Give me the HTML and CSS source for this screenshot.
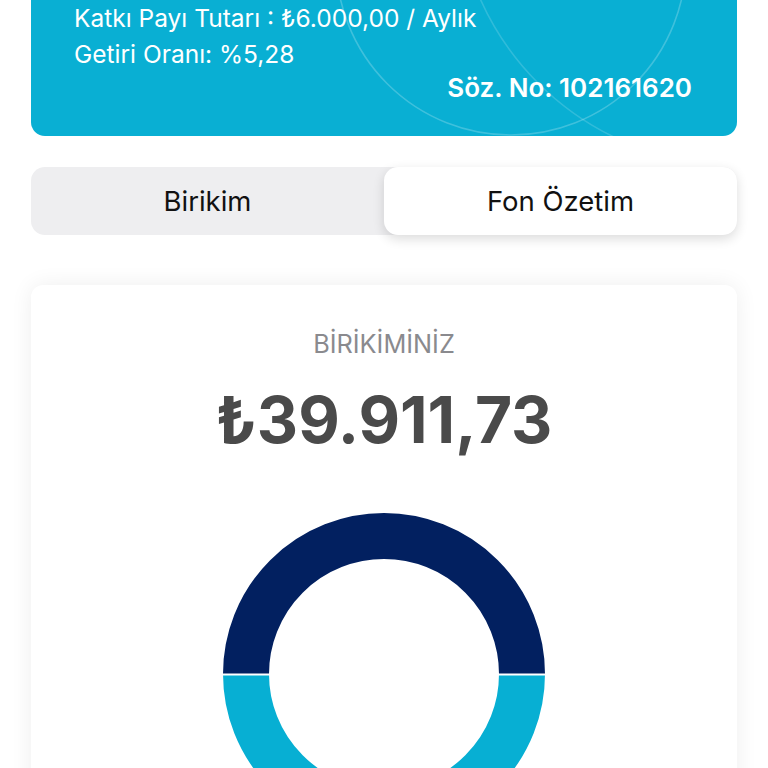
FILE: index.html
```html
<!DOCTYPE html>
<html lang="tr">
<head>
<meta charset="utf-8">
<link rel="stylesheet" href="styles.css">
</head>
<body>
<div class="page">
  <section class="banner">
    <svg class="banner-deco" width="706" height="136" viewBox="0 0 706 136" aria-hidden="true">
      <circle cx="480" cy="-40" r="175" fill="none" stroke="rgba(255,255,255,0.22)" stroke-width="1.6"/>
      <circle cx="705" cy="-115" r="280" fill="none" stroke="rgba(255,255,255,0.16)" stroke-width="1.6"/>
      <circle cx="880" cy="210" r="185" fill="none" stroke="rgba(255,255,255,0.3)" stroke-width="1.6"/>
    </svg>
    <p class="banner-line">Katkı Payı Tutarı : ₺6.000,00 / Aylık</p>
    <p class="banner-line">Getiri Oranı: %5,28</p>
    <p class="banner-no">Söz. No: 102161620</p>
  </section>

  <nav class="segmented">
    <div class="seg-item">Birikim</div>
    <div class="seg-item seg-active">Fon Özetim</div>
  </nav>

  <section class="card">
    <p class="card-label">BİRİKİMİNİZ</p>
    <p class="card-amount">₺39.911,73</p>
    <div class="donut">
      <svg width="322" height="322" viewBox="0 0 322 322">
        <path d="M 23 161 A 138 138 0 0 1 299 161" fill="none" stroke="#022060" stroke-width="46"/>
        <path d="M 23 161 A 138 138 0 0 0 299 161" fill="none" stroke="#07AFD3" stroke-width="46"/>
        <line x1="0" y1="161.5" x2="322" y2="161.5" stroke="#ffffff" stroke-width="2"/>
      </svg>
    </div>
  </section>
</div>
</body>
</html>
```

FILE: styles.css
```css
* { box-sizing: border-box; }
html, body {
  margin: 0;
  padding: 0;
  background: #ffffff;
  font-family: Inter, "Noto Sans", "DejaVu Sans", sans-serif;
  overflow: hidden;
}
p { margin: 0; }

.page {
  padding: 0 31px;
}

.banner {
  position: relative;
  overflow: hidden;
  background: #09AFD3;
  border-radius: 0 0 14px 14px;
  padding: 0 45px 32px 43px;
  color: #ffffff;
}
.banner-deco {
  position: absolute;
  left: 0;
  top: 0;
}
.banner-line {
  position: relative;
  font-size: 24.5px;
  line-height: 36px;
}
.banner-no {
  position: relative;
  text-align: right;
  font-size: 26px;
  font-weight: 600;
  line-height: 32px;
}

.segmented {
  margin-top: 31px;
  display: grid;
  grid-template-columns: 1fr 1fr;
  height: 68px;
  background: #EEEEF0;
  border-radius: 14px;
}
.seg-item {
  display: flex;
  align-items: center;
  justify-content: center;
  font-size: 27.5px;
  color: #111111;
  border-radius: 14px;
}
.seg-active {
  background: #ffffff;
  box-shadow: 0 4px 12px rgba(0, 0, 0, 0.14);
}

.card {
  margin-top: 50px;
  background: #ffffff;
  border-radius: 12px;
  box-shadow: 0 0 22px rgba(0, 0, 0, 0.07);
  padding-top: 44px;
  display: flex;
  flex-direction: column;
  align-items: center;
  height: 600px;
}
.card-label {
  font-size: 25.3px;
  line-height: 30px;
  color: #8A8A8E;
}
.card-amount {
  margin-top: 25px;
  font-size: 64px;
  line-height: 72px;
  font-weight: 700;
  color: #4A4A4A;
}
.donut {
  margin-top: 57px;
  width: 322px;
  height: 322px;
}
.donut svg { display: block; }
```
